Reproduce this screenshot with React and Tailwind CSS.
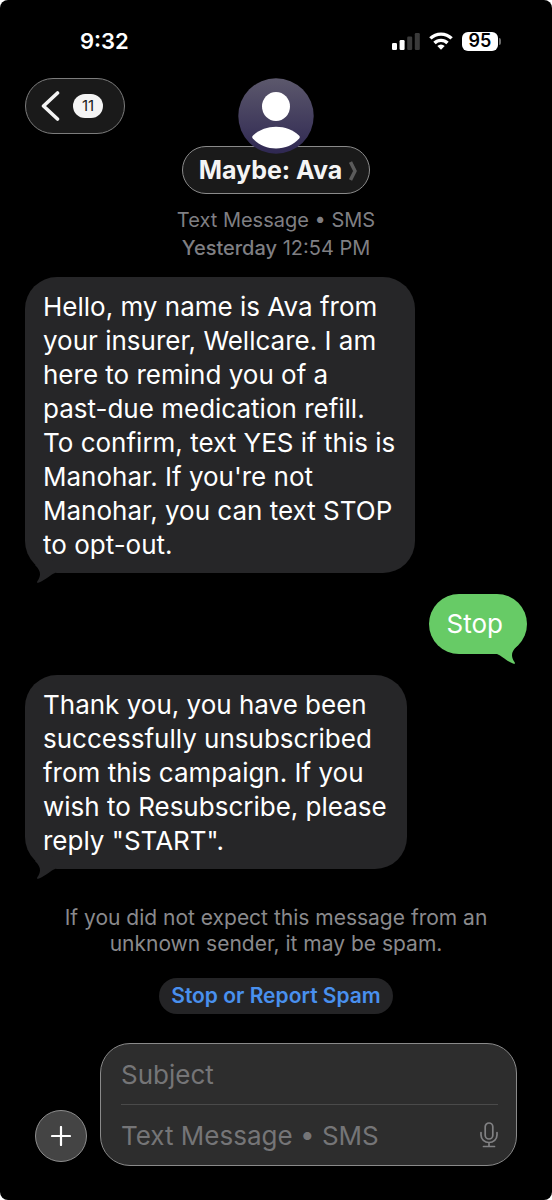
import clsx from "clsx";

const messages = [
    {
        id: 1,
        mine: false,
        text: "Hello, my name is Ava from\nyour insurer, Wellcare. I am\nhere to remind you of a\npast-due medication refill.\nTo confirm, text YES if this is\nManohar. If you're not\nManohar, you can text STOP\nto opt-out.",
    },
    { id: 2, mine: true, text: "Stop" },
    {
        id: 3,
        mine: false,
        text: "Thank you, you have been\nsuccessfully unsubscribed\nfrom this campaign. If you\nwish to Resubscribe, please\nreply \"START\".",
    },
];

function StatusBar() {
    return (
        <div className="flex items-center justify-between pl-20 pr-[51px] pt-[26px] h-14">
            <span className="text-[22px] leading-[30px] font-semibold">9:32</span>
            <div className="flex items-center gap-[9px]">
                {/* signal */}
                <svg width="28" height="18" viewBox="0 0 28 18" fill="#fff">
                    <rect x="0" y="11" width="5" height="7" rx="1.2" />
                    <rect x="7.6" y="8" width="5" height="10" rx="1.2" />
                    <rect x="15.2" y="4.5" width="5" height="13.5" rx="1.2" fill="#3a3a3a" />
                    <rect x="22.8" y="1" width="5" height="17" rx="1.2" fill="#3a3a3a" />
                </svg>
                {/* wifi */}
                <svg width="24" height="18" viewBox="0 0 24 18" fill="none" stroke="#fff" strokeWidth="3.4">
                    <path d="M1.4 6.4a15.2 15.2 0 0 1 21.2 0" />
                    <path d="M5.5 11a9.3 9.3 0 0 1 13 0" />
                    <path d="M12 17.8 8.3 14.1a5.3 5.3 0 0 1 7.4 0Z" fill="#fff" stroke="none" />
                </svg>
                {/* battery */}
                <div className="flex items-center gap-px">
                    <span className="flex h-[19px] w-9 items-center justify-center rounded-md bg-white text-[18px] leading-none font-semibold text-black">
                        95
                    </span>
                    <span className="h-[7px] w-0.5 rounded-r-full bg-[#6a6a6a]" />
                </div>
            </div>
        </div>
    );
}

function Header() {
    return (
        <header className="grid grid-cols-[100px_1fr_100px] items-start px-[25px] pt-[22px]">
            <button
                aria-label="Back, 11 unread"
                className="flex h-14 items-center gap-[13px] rounded-full border border-[#7c7c7c] bg-[#1a1a1a] pl-[15px]"
            >
                <svg width="19" height="30" viewBox="0 0 19 30" fill="none" stroke="#f4f4f4" strokeWidth="3.6" strokeLinecap="round" strokeLinejoin="round">
                    <path d="M16.5 2 2.5 15l14 13" />
                </svg>
                <span className="flex h-6 w-[30px] items-center justify-center rounded-full bg-[#f4f4f4] text-[15px] text-[#1a1a1a]">
                    11
                </span>
            </button>

            <div className="flex flex-col items-center">
                <svg className="relative z-10" width="76" height="76" viewBox="0 0 76 76">
                    <defs>
                        <linearGradient id="avatar" x1="0" y1="0" x2="0" y2="1">
                            <stop offset="0" stopColor="#5c586c" />
                            <stop offset="1" stopColor="#2f2852" />
                        </linearGradient>
                    </defs>
                    <circle cx="38" cy="38" r="37.7" fill="url(#avatar)" />
                    <ellipse cx="38" cy="28.5" rx="14" ry="14.5" fill="#fff" />
                    <path d="M14.800 60.500Q13.500 59 15 57.500C21 52 29 48.800 38 48.800S55 52 61 57.500Q62.500 59 61.200 60.500C55.500 67 47 70.500 38 70.500S20.500 67 14.800 60.500Z" fill="#fff" />
                </svg>
                <button className="-mt-2 flex h-12 items-center gap-[7px] rounded-full border border-[#8a8a8a] bg-[#1a1a1a] pl-4 pr-3 pt-0.5 text-[25px] font-bold text-[#f4f4f4] whitespace-nowrap">
                    Maybe: Ava
                    <svg width="8" height="20" viewBox="0 0 8 20" fill="none" stroke="#5b5b5b" strokeWidth="3.5" strokeLinejoin="round">
                        <path d="M1.500 1 6 10 1.500 19" />
                    </svg>
                </button>
            </div>
        </header>
    );
}

function Bubble({ text, mine }) {
    return (
        <div
            className={clsx(
                "relative w-fit min-h-[60px] pt-[13px] pb-[11px] pl-[18px] text-[26px] leading-[34px] whitespace-pre-line text-white",
                mine ? "self-end rounded-[30px] bg-[#67cb66] pr-6" : "self-start rounded-[32px] bg-[#262628] pr-5"
            )}
        >
            {text}
            <svg
                className={clsx("absolute -bottom-2.5", mine ? "right-0" : "left-0 -scale-x-100")}
                width="30"
                height="26"
                viewBox="0 0 30 26"
                fill={mine ? "#67cb66" : "#262628"}
            >
                <path d="M0 16C5 18 8 22 16 25.500Q19 26.500 17.500 24C14.500 19 13 15 20 8L12 0 0 4Z" />
            </svg>
        </div>
    );
}

function Composer() {
    return (
        <form className="flex items-end gap-[13px] px-[35px] pb-[34px]">
            <button
                type="button"
                aria-label="Add attachment"
                className="mb-1 flex size-[52px] shrink-0 items-center justify-center rounded-full border border-[#8e8e8e] bg-[#444]"
            >
                <svg width="20" height="20" viewBox="0 0 20 20" stroke="#fff" strokeWidth="2.200" strokeLinecap="round">
                    <path d="M10 1v18M1 10h18" />
                </svg>
            </button>
            <div className="min-w-0 flex-1 rounded-[30px] border border-[#8a8a8a] bg-[#2d2d2d] pl-5 pr-[18px]">
                <input
                    aria-label="Subject"
                    placeholder="Subject"
                    className="block h-[61px] w-full border-b border-[#4a4a4a] bg-transparent text-[26px] placeholder:text-[#757577] outline-none"
                />
                <div className="flex h-[60px] items-center">
                    <input
                        aria-label="Text Message"
                        placeholder="Text Message • SMS"
                        className="min-w-0 flex-1 bg-transparent text-[26px] placeholder:text-[#757577] outline-none"
                    />
                    <button type="button" aria-label="Dictate">
                        <svg width="18" height="26" viewBox="0 0 18 26" fill="none" stroke="#818183" strokeWidth="1.700" strokeLinecap="round">
                            <rect x="5.200" y="1" width="7.600" height="16" rx="3.800" />
                            <path d="M1 10.500v2.500a8 7.500 0 0 0 16 0v-2.500M9 20.500v4M3.500 24.500h11" />
                        </svg>
                    </button>
                </div>
            </div>
        </form>
    );
}

function App() {
    return (
        <div className="bg-white">
            <div className="flex min-h-screen flex-col rounded-lg bg-black text-white font-['Inter','Liberation_Sans',sans-serif]">
                <StatusBar />
                <Header />

                <p className="pt-3 text-center text-[20px] leading-7 text-[#7f7f83]">
                    Text Message • SMS
                    <br />
                    <span className="font-medium">Yesterday</span> 12:54 PM
                </p>

                <main className="flex flex-col gap-[21px] px-[25px] pt-[15px]">
                    {messages.map((message) => (
                        <Bubble key={message.id} text={message.text} mine={message.mine} />
                    ))}
                </main>

                <div className="flex flex-1 flex-col items-center pt-9 text-center">
                    <p className="text-[21px] leading-[26px] text-[#8a8a8d]">
                        If you did not expect this message from an
                        <br />
                        unknown sender, it may be spam.
                    </p>
                    <button className="mt-[21px] h-9 rounded-full bg-[#242426] px-3 text-[21px] font-semibold text-[#4990ee]">
                        Stop or Report Spam
                    </button>
                </div>

                <Composer />
            </div>
        </div>
    );
}

export default App;
